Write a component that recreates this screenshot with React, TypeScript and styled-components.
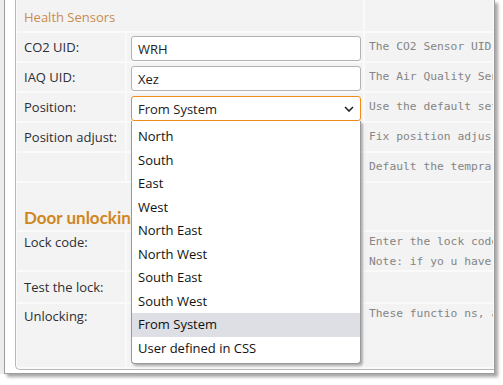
import styled, { createGlobalStyle } from "styled-components";

const GlobalStyle = createGlobalStyle`
  html, body {
    margin: 0;
    padding: 0;
    background: #fff;
  }
  body {
    font-family: "Open Sans", "Noto Sans", sans-serif;
    width: 503px;
    height: 385px;
    overflow: hidden;
  }
`;

const positions = [
    "North",
    "South",
    "East",
    "West",
    "North East",
    "North West",
    "South East",
    "South West",
    "From System",
    "User defined in CSS",
];

const ChevronDown = () => (
    <svg width="10" height="6" viewBox="0 0 10 6">
        <path d="M1 1 L5 5 L9 1" fill="none" stroke="#222" strokeWidth="1.6" />
    </svg>
);

export default function App() {
    return (
        <>
            <GlobalStyle />
            <Frame>
                <Panel>
                    <Rows>
                        <Row $h={31}>
                            <SectionCell>Health Sensors</SectionCell>
                            <Desc />
                        </Row>
                        <Row $h={28}>
                            <Label>CO2 UID:</Label>
                            <Field>
                                <TextInput defaultValue="WRH" />
                            </Field>
                            <Desc>The CO2 Sensor UID</Desc>
                        </Row>
                        <Row $h={28}>
                            <Label>IAQ UID:</Label>
                            <Field>
                                <TextInput defaultValue="Xez" />
                            </Field>
                            <Desc>The Air Quality Sen</Desc>
                        </Row>
                        <Row $h={28}>
                            <Label>Position:</Label>
                            <Field>
                                <SelectWrap>
                                    <SelectBox>
                                        <span>From System</span>
                                        <ChevronDown />
                                    </SelectBox>
                                    <OptionList>
                                        {positions.map((p) => (
                                            <Option key={p} $active={p === "From System"}>
                                                {p}
                                            </Option>
                                        ))}
                                    </OptionList>
                                </SelectWrap>
                            </Field>
                            <Desc>Use the default set</Desc>
                        </Row>
                        <Row $h={28}>
                            <Label>Position adjust:</Label>
                            <Field>
                                <TextInput defaultValue="0" />
                            </Field>
                            <Desc>Fix position adjus</Desc>
                        </Row>
                        <Row $h={28}>
                            <Label />
                            <Field />
                            <Desc>Default the tempra</Desc>
                        </Row>
                        <Row $h={47}>
                            <Heading>Door unlocking</Heading>
                            <Desc />
                        </Row>
                        <Row $h={38}>
                            <Label $top $pt={0}>Lock code:</Label>
                            <Field />
                            <Desc $top>
                                Enter the lock code
                                <br />
                                Note: if yo u have
                            </Desc>
                        </Row>
                        <Row $h={30}>
                            <Label>Test the lock:</Label>
                            <Field />
                            <Desc />
                        </Row>
                        <Row $h={63}>
                            <Label $top $pt={2}>Unlocking:</Label>
                            <Field />
                            <Desc $top>These functio ns, a</Desc>
                        </Row>
                    </Rows>
                </Panel>
            </Frame>
        </>
    );
}

const Frame = styled.div`
    box-sizing: border-box;
    margin-left: 4px;
    width: 491px;
    padding: 0 0 3px 10px;
    background: #fff;
    border: 1px solid #9d9d9d;
    border-top: none;
    box-shadow: -4px 0 0 #ececec, 3px 3px 3px rgba(0, 0, 0, 0.35);
`;

const Panel = styled.div`
    background: #fafafa;
    border-left: 1px solid #b8b8b8;
    border-bottom: 1px solid #b8b8b8;
    border-bottom-left-radius: 5px;
    padding: 0 0 2px 1px;
`;

const Rows = styled.div`
    display: flex;
    flex-direction: column;
    gap: 2px;
`;

const Row = styled.div<{ $h: number }>`
    display: grid;
    grid-template-columns: 108px 236px 128px;
    column-gap: 2px;
    height: ${(p) => p.$h}px;
`;

const Cell = styled.div`
    background: #f3f3f3;
    min-width: 0;
    box-sizing: border-box;
`;

const Label = styled(Cell)<{ $top?: boolean; $pt?: number }>`
    display: flex;
    align-items: ${(p) => (p.$top ? "flex-start" : "center")};
    padding: ${(p) => (p.$top ? `${p.$pt ?? 0}px` : "0")} 0 0 7px;
    font-size: 13px;
    line-height: 20px;
    color: #2e2e33;
    white-space: nowrap;
`;

const SectionCell = styled(Cell)`
    grid-column: span 2;
    display: flex;
    align-items: center;
    padding: 3px 0 0 7px;
    font-size: 13px;
    color: #c98b4f;
`;

const Heading = styled(Cell)`
    grid-column: span 2;
    display: flex;
    align-items: flex-end;
    padding-left: 7px;
    font-family: Lato, "Open Sans", sans-serif;
    font-weight: 700;
    font-size: 17px;
    line-height: 24px;
    color: #d0861e;
    white-space: nowrap;
    overflow: hidden;
`;

const Field = styled(Cell)`
    padding: 3px 3px 0 4px;
`;

const Desc = styled(Cell)<{ $top?: boolean }>`
    display: block;
    padding: ${(p) => (p.$top ? "0" : "4px")} 0 0 4px;
    font-family: "DejaVu Sans Mono", "Liberation Mono", monospace;
    font-size: 11.3px;
    line-height: 20px;
    color: #858585;
    white-space: pre;
    overflow: hidden;
`;

const TextInput = styled.input`
    box-sizing: border-box;
    width: 230px;
    height: 25px;
    margin: 0;
    padding: 0 6px;
    border: 1px solid #b3b3b3;
    border-radius: 3px;
    background: #fff;
    font-family: "Open Sans", sans-serif;
    font-size: 13px;
    color: #222;
    outline: none;
`;

const SelectWrap = styled.div`
    position: relative;
    width: 230px;
`;

const SelectBox = styled.div`
    box-sizing: border-box;
    height: 25px;
    display: flex;
    align-items: center;
    justify-content: space-between;
    padding: 0 6px;
    border: 1px solid #f08c1c;
    border-radius: 3px;
    background: #fff;
    font-size: 13px;
    color: #222;
`;

const OptionList = styled.div`
    position: absolute;
    top: 100%;
    left: 0;
    right: 0;
    z-index: 10;
    background: #fff;
    border: 1px solid #9a9a9a;
    border-top: none;
    border-radius: 0 0 4px 4px;
    box-shadow: 2px 2px 3px rgba(0, 0, 0, 0.3);
    padding: 4px 0 3px;
`;

const Option = styled.div<{ $active?: boolean }>`
    height: 23.5px;
    line-height: 23.5px;
    padding-left: 6px;
    font-size: 13px;
    color: #111;
    background: ${(p) => (p.$active ? "#dedfe4" : "#fff")};
    white-space: nowrap;
`;
